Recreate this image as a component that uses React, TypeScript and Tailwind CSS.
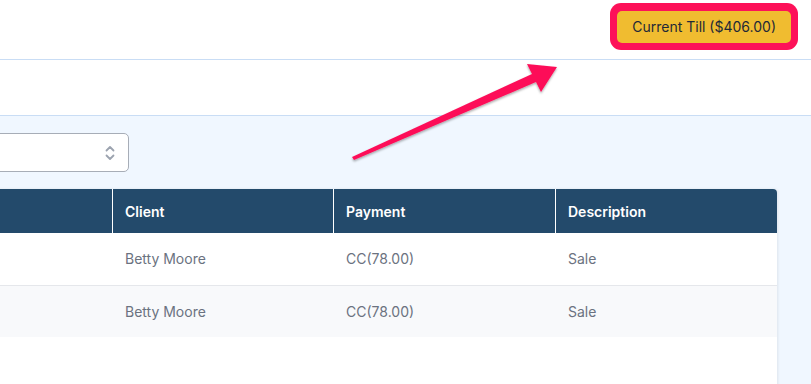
export default function App() {
  const rows = [
    { client: "Betty Moore", payment: "CC(78.00)", description: "Sale" },
    { client: "Betty Moore", payment: "CC(78.00)", description: "Sale" },
  ];

  return (
    <div className="relative w-[811px] h-[384px] overflow-hidden bg-white font-['Inter',sans-serif]">
      {/* top bar */}
      <header className="h-[60px] border-b border-[#c9ddf5] flex justify-end items-start pt-[3px] pr-[13px]">
        <div className="rounded-[11px] bg-[#fd1159] px-[7px] pt-[8px] pb-[7px]">
          <button className="h-[32px] pl-[15px] pr-[15px] rounded-[5px] bg-[#f0bc30] text-[14px] text-[#1f2937] leading-none">
            Current Till ($406.00)
          </button>
        </div>
      </header>

      {/* sub bar */}
      <div className="h-[56px] border-b border-[#c9ddf5]" />

      {/* main */}
      <main className="h-[268px] bg-[#f0f7ff] pt-[17px] pr-[34px]">
        <div className="-ml-[40px] w-[169px] h-[39px] rounded-[5px] border border-[#a7adb7] bg-white flex items-center justify-end pr-[12px]">
          <svg width="12" height="16" viewBox="0 0 12 16" fill="none" stroke="#9ca3af" strokeWidth="1.8" strokeLinecap="round" strokeLinejoin="round">
            <path d="M2.5 5.5 L6 2 L9.5 5.5" />
            <path d="M2.5 10.5 L6 14 L9.5 10.5" />
          </svg>
        </div>

        <div className="mt-[17px] -ml-[40px] h-[260px] bg-white rounded-tr-[4px] shadow-[1px_0_3px_rgba(0,0,0,0.08)] overflow-hidden">
          <div className="grid grid-cols-[153px_221px_222px_221px] h-[44px] bg-[#234a6b] text-white text-[14px] font-semibold">
            <div className="border-r border-white" />
            <div className="border-r border-white flex items-center pl-[12px]">Client</div>
            <div className="border-r border-white flex items-center pl-[12px]">Payment</div>
            <div className="flex items-center pl-[12px]">Description</div>
          </div>
          {rows.map((r, i) => (
            <div
              key={i}
              className={`grid grid-cols-[153px_221px_222px_221px] text-[14px] text-[#6b7280] ${
                i === 0 ? "h-[53px] border-b border-[#e5e7eb] bg-white" : "h-[51px] bg-[#f8f9fb]"
              }`}
            >
              <div />
              <div className="flex items-center pl-[12px] pb-[1px]">{r.client}</div>
              <div className="flex items-center pl-[12px] pb-[1px]">{r.payment}</div>
              <div className="flex items-center pl-[12px] pb-[1px]">{r.description}</div>
            </div>
          ))}
        </div>
      </main>

      {/* annotation arrow */}
      <svg className="absolute left-0 top-0 pointer-events-none" width="811" height="384">
        <defs>
          <filter id="sh" x="-10%" y="-20%" width="120%" height="140%">
            <feDropShadow dx="0" dy="1.5" stdDeviation="1.2" floodColor="#000" floodOpacity="0.35" />
          </filter>
        </defs>
        <polygon
          points="352,157 532,74 527,64 557,67 541,92 536,82 354,160"
          fill="#fd1159"
          filter="url(#sh)"
        />
      </svg>
    </div>
  );
}
